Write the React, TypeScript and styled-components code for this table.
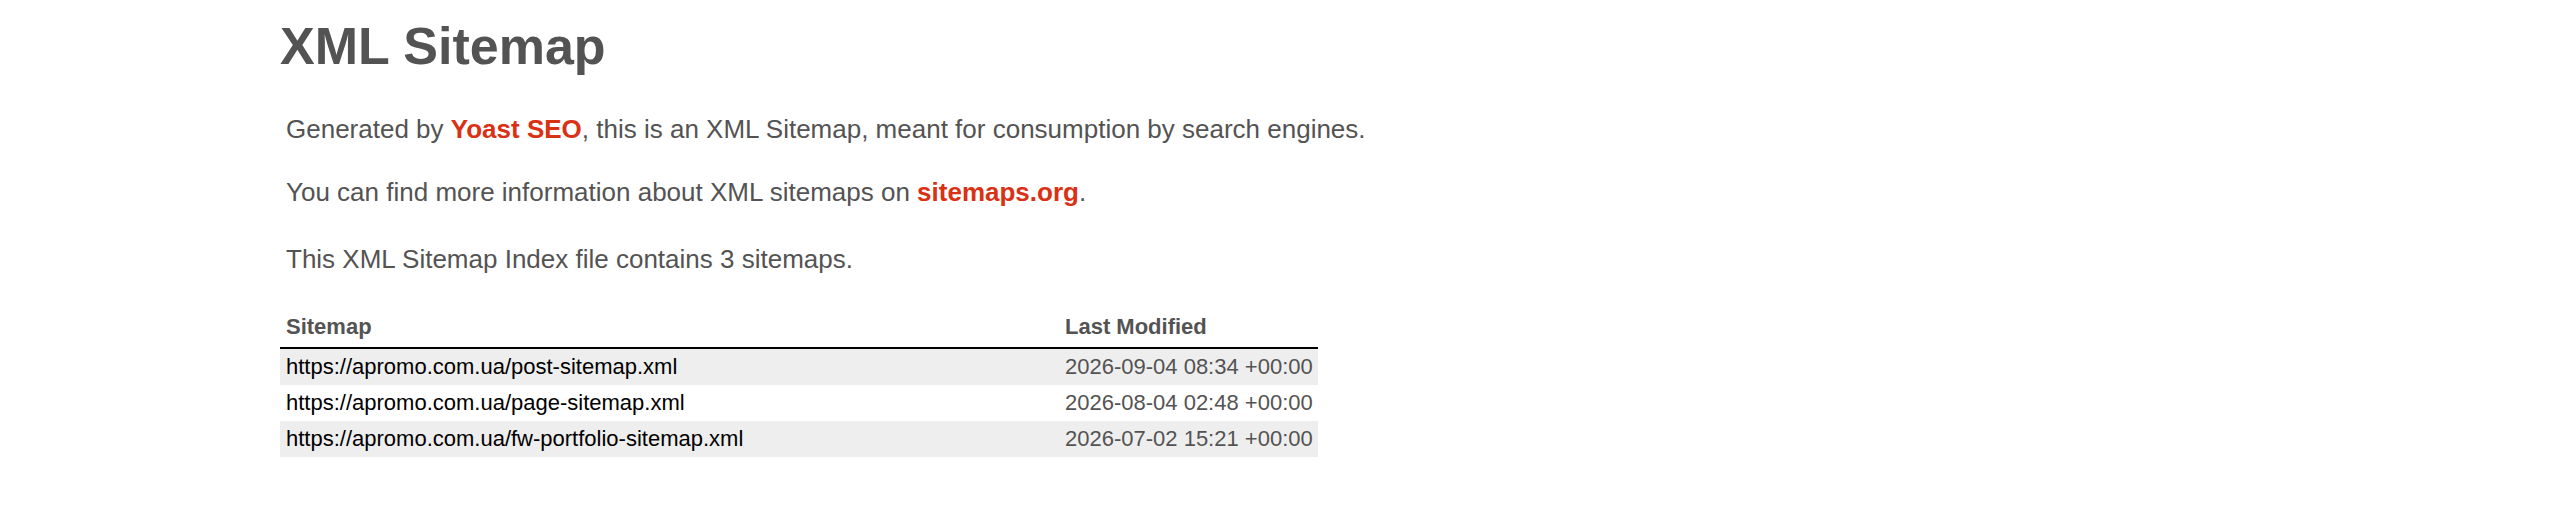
import styled, { createGlobalStyle } from "styled-components";

const GlobalStyle = createGlobalStyle`
  html, body {
    margin: 0;
    padding: 0;
    background: #fff;
  }
  body {
    font-family: "Liberation Sans", Arial, Helvetica, sans-serif;
    font-size: 26px;
    color: #545353;
  }
`;

const sitemaps = [
  { loc: "https://apromo.com.ua/post-sitemap.xml", lastmod: "2026-09-04 08:34 +00:00" },
  { loc: "https://apromo.com.ua/page-sitemap.xml", lastmod: "2026-08-04 02:48 +00:00" },
  { loc: "https://apromo.com.ua/fw-portfolio-sitemap.xml", lastmod: "2026-07-02 15:21 +00:00" },
];

export default function App() {
  return (
    <>
      <GlobalStyle />
      <Content>
        <Title>XML Sitemap</Title>
        <Expl $after={32}>
          Generated by <ExplLink href="#">Yoast SEO</ExplLink>, this is an XML Sitemap,
          meant for consumption by search engines.
        </Expl>
        <Expl $after={36}>
          You can find more information about XML sitemaps on{" "}
          <ExplLink href="#">sitemaps.org</ExplLink>.
        </Expl>
        <Expl $after={33}>
          This XML Sitemap Index file contains {sitemaps.length} sitemaps.
        </Expl>
        <SitemapTable>
          <thead>
            <tr>
              <Th $width={779}>Sitemap</Th>
              <Th $width={259}>Last Modified</Th>
            </tr>
          </thead>
          <tbody>
            {sitemaps.map((s, i) => (
              <Row key={s.loc} $odd={i % 2 === 0}>
                <Td>
                  <UrlLink href="#">{s.loc}</UrlLink>
                </Td>
                <Td>{s.lastmod}</Td>
              </Row>
            ))}
          </tbody>
        </SitemapTable>
      </Content>
    </>
  );
}

const Content = styled.div`
  width: 2000px;
  margin: 0 auto;
`;

const Title = styled.h1`
  font-size: 52px;
  font-weight: bold;
  line-height: normal;
  margin: 16px 0 38px;
  color: #545353;
`;

const Expl = styled.p<{ $after: number }>`
  margin: 0 6px ${(p) => p.$after}px;
  line-height: 1.2em;
`;

const ExplLink = styled.a`
  color: #da3114;
  font-weight: 600;
  text-decoration: none;
`;

const SitemapTable = styled.table`
  border: none;
  border-collapse: collapse;
  table-layout: fixed;
  width: 1038px;
`;

const Th = styled.th<{ $width: number }>`
  width: ${(p) => p.$width}px;
  text-align: left;
  font-size: 22px;
  line-height: 24px;
  padding: 6px 6px 8px;
  border-bottom: 2px solid #000;
  box-sizing: border-box;
`;

const Row = styled.tr<{ $odd: boolean }>`
  background-color: ${(p) => (p.$odd ? "#eee" : "transparent")};
`;

const Td = styled.td`
  font-size: 22px;
  line-height: 24px;
  padding: 6px;
  white-space: nowrap;
`;

const UrlLink = styled.a`
  color: #000;
  text-decoration: none;
`;
